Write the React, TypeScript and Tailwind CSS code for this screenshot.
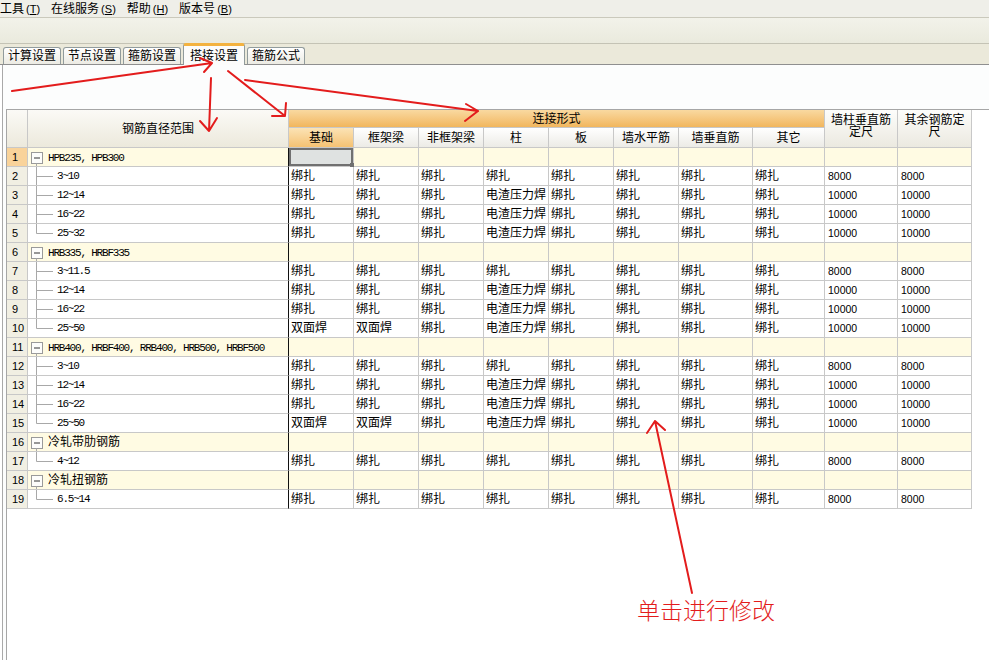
import React from 'react';

type Row = { n: number; label: string; group?: boolean; last?: boolean; v?: string[] };

const B = '绑扎';
const D = '电渣压力焊';
const S = '双面焊';
const plain = [B, B, B, B, B, B, B, B, '8000', '8000'];
const weld = [B, B, B, D, B, B, B, B, '10000', '10000'];
const both = [S, S, B, D, B, B, B, B, '10000', '10000'];

const rows: Row[] = [
  { n: 1, label: 'HPB235, HPB300', group: true },
  { n: 2, label: '3~10', v: plain },
  { n: 3, label: '12~14', v: weld },
  { n: 4, label: '16~22', v: weld },
  { n: 5, label: '25~32', v: weld, last: true },
  { n: 6, label: 'HRB335, HRBF335', group: true },
  { n: 7, label: '3~11.5', v: plain },
  { n: 8, label: '12~14', v: weld },
  { n: 9, label: '16~22', v: weld },
  { n: 10, label: '25~50', v: both, last: true },
  { n: 11, label: 'HRB400, HRBF400, RRB400, HRB500, HRBF500', group: true },
  { n: 12, label: '3~10', v: plain },
  { n: 13, label: '12~14', v: weld },
  { n: 14, label: '16~22', v: weld },
  { n: 15, label: '25~50', v: both, last: true },
  { n: 16, label: '冷轧带肋钢筋', group: true },
  { n: 17, label: '4~12', v: plain, last: true },
  { n: 18, label: '冷轧扭钢筋', group: true },
  { n: 19, label: '6.5~14', v: plain, last: true },
];

const subHeads = ['基础', '框架梁', '非框架梁', '柱', '板', '墙水平筋', '墙垂直筋', '其它'];
const menu = [
  ['工具', 'T'],
  ['在线服务', 'S'],
  ['帮助', 'H'],
  ['版本号', 'B'],
];
const tabs = ['计算设置', '节点设置', '箍筋设置', '搭接设置', '箍筋公式'];

const isCjk = (s: string) => /[\u4e00-\u9fff]/.test(s);

function Label({ text }: { text: string }) {
  if (isCjk(text)) return <span className="text-[12px] whitespace-nowrap">{text}</span>;
  return (
    <span className="font-['Liberation_Mono',monospace] text-[11px] tracking-[-1.2px] whitespace-nowrap">
      {text}
    </span>
  );
}

function TreeBox() {
  return (
    <svg width="18" height="18" className="shrink-0">
      <rect x="3.5" y="4.5" width="11" height="11" fill="#fdfdfb" stroke="#9a9a9a" />
      <line x1="6" y1="10" x2="12" y2="10" stroke="#333" />
      <line x1="8.5" y1="15.5" x2="8.5" y2="18" stroke="#a8a8a8" />
    </svg>
  );
}

function TreeLine({ last }: { last?: boolean }) {
  return (
    <svg width="29" height="18" className="shrink-0">
      <line x1="8.5" y1="0" x2="8.5" y2={last ? 9.5 : 18} stroke="#a8a8a8" />
      <line x1="8.5" y1="9.5" x2="25" y2="9.5" stroke="#a8a8a8" />
    </svg>
  );
}

export default function App() {
  const line = 'border-r border-b border-[#c8c8c8]';
  return (
    <div className="relative w-[989px] h-[660px] overflow-hidden bg-white text-black font-['Liberation_Sans','Noto_Sans_CJK_SC',sans-serif] text-[12px]">
      {/* menu bar */}
      <div className="h-[18px] flex items-center gap-[11px] bg-[#efefe9] border-b border-[#cac9bc] leading-none">
        {menu.map(([t, k]) => (
          <span key={t} className="whitespace-nowrap">
            {t}
            <span className="ml-[2px] text-[11px]">
              (<span className="underline">{k}</span>)
            </span>
          </span>
        ))}
      </div>
      {/* toolbar */}
      <div className="h-[26px] bg-linear-to-b from-[#f2f2ea] to-[#eaeadd] border-b border-[#c4c3b5]" />
      {/* tab strip */}
      <div className="h-[21px] bg-[#ebe9da] border-b border-[#8f8f8f] flex items-end pl-[3px] gap-[2px]">
        {tabs.map((t) =>
          t === '搭接设置' ? (
            <div
              key={t}
              className="h-[22px] -mb-px w-[62px] flex items-center justify-center bg-[#fcfcfb] border border-b-0 border-[#919b9c] border-t-[3px] border-t-[#f3b23f] rounded-t-[3px] leading-none"
            >
              {t}
            </div>
          ) : (
            <div
              key={t}
              className="h-[17px] w-[58px] flex items-center justify-center bg-linear-to-b from-[#ffffff] to-[#ecebe3] border border-b-0 border-[#919b9c] rounded-t-[3px] leading-none"
            >
              {t}
            </div>
          )
        )}
      </div>

      {/* content */}
      <div className="ml-[2px] border-l border-[#a9a9a9] h-[595px] bg-[#fcfdfd] pt-[44px]">
        <div className="ml-[3px] border-l border-t border-[#a6a6a6] h-full bg-white">
          <div className="grid w-[965px] grid-cols-[21px_261px_65px_65px_65px_65px_65px_65px_74px_72px_73px_74px]">
            {/* header */}
            <div className={`row-span-2 ${line} bg-linear-to-b from-[#fbfaf6] to-[#ece9dc]`} />
            <div className={`row-span-2 ${line} bg-linear-to-b from-[#fbfaf6] to-[#ece9dc] flex items-center justify-center`}>
              钢筋直径范围
            </div>
            <div className={`col-span-8 h-[18px] ${line} bg-linear-to-b from-[#f9d9a0] to-[#f1b65c] flex items-center justify-center leading-none`}>
              连接形式
            </div>
            <div className={`row-span-2 ${line} bg-linear-to-b from-[#fdfdfb] to-[#ebe9e0] flex justify-center pt-[4px]`}>
              <div className="w-[62px] text-center leading-[12px] break-all">墙柱垂直筋定尺</div>
            </div>
            <div className={`row-span-2 ${line} bg-linear-to-b from-[#fdfdfb] to-[#ebe9e0] flex justify-center pt-[4px]`}>
              <div className="w-[62px] text-center leading-[12px] break-all">其余钢筋定尺</div>
            </div>
            {subHeads.map((h, i) => (
              <div
                key={h}
                className={`h-[20px] ${line} flex items-center justify-center leading-none ${
                  i === 0
                    ? 'bg-linear-to-b from-[#fbe3b5] to-[#f5c272]'
                    : 'bg-linear-to-b from-[#ffffff] to-[#ecebe6]'
                }`}
              >
                {h}
              </div>
            ))}

            {/* body */}
            {rows.map((r) => (
              <React.Fragment key={r.n}>
                <div
                  className={`h-[19px] ${line} flex items-center pl-[5px] text-[11px] leading-none ${
                    r.n === 1 ? 'bg-[#f9d39a]' : 'bg-[#f1efe3]'
                  }`}
                >
                  {r.n}
                </div>
                <div
                  className={`h-[19px] border-b border-[#c8c8c8] border-r border-r-[#111] flex items-center leading-none ${
                    r.group ? 'bg-[#fffbe3]' : 'bg-white'
                  }`}
                >
                  {r.group ? (
                    <>
                      <TreeBox />
                      <span className="ml-[2px]">
                        <Label text={r.label} />
                      </span>
                    </>
                  ) : (
                    <>
                      <TreeLine last={r.last} />
                      <Label text={r.label} />
                    </>
                  )}
                </div>
                {Array.from({ length: 10 }).map((_, i) => {
                  const val = r.v ? r.v[i] : '';
                  const sel = r.n === 1 && i === 0;
                  return (
                    <div
                      key={i}
                      className={`relative h-[19px] ${line} flex items-center pl-[2px] leading-none whitespace-nowrap ${
                        sel
                          ? 'bg-[#dfe2e1] shadow-[inset_0_0_0_2px_#707070]'
                          : r.group
                          ? 'bg-[#fffbe3]'
                          : 'bg-white'
                      } ${i >= 8 ? 'text-[10.5px] pl-[3px]' : ''}`}
                    >
                      {val}
                      {sel && <span className="absolute right-[-2px] bottom-[-2px] w-[5px] h-[5px] bg-[#707070]" />}
                    </div>
                  );
                })}
              </React.Fragment>
            ))}
          </div>
        </div>
      </div>

      {/* red annotations */}
      <svg
        className="absolute left-0 top-0 pointer-events-none"
        width="989"
        height="660"
        fill="none"
        stroke="#e31c1c"
        strokeWidth="2"
        strokeLinecap="round"
        strokeLinejoin="round"
      >
        <path d="M12 91 L212 63 M200 58 L212 63 L204 72" />
        <path d="M211 78 L209 131 M200 121 L209 131 L217 118" />
        <path d="M228 71 L285 116 M286 103 L285 116 L272 116" />
        <path d="M245 80 L478 111 M466 104 L478 111 L465 121" />
        <path d="M692 593 L655 421 M647 433 L655 421 L665 430" />
      </svg>
      <div className="absolute left-[637px] top-[594px] text-[23px] leading-[30px] text-[#e31c1c] font-['Noto_Sans_CJK_SC',sans-serif] font-light whitespace-nowrap">
        单击进行修改
      </div>
    </div>
  );
}
